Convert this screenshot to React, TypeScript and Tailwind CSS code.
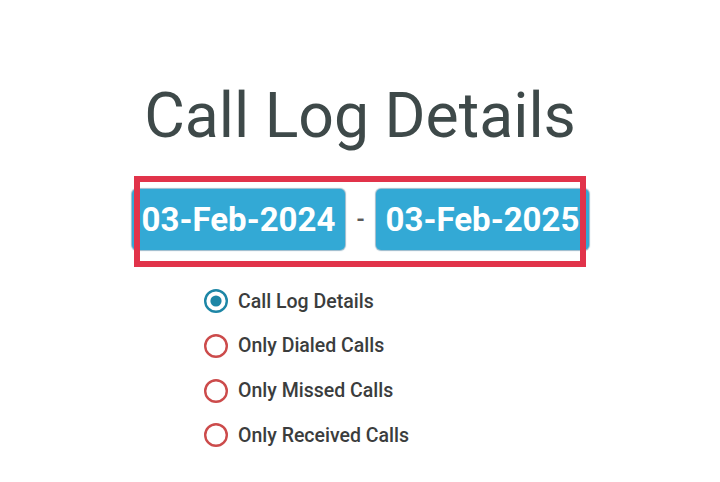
import React, { useState } from 'react';

const options = ['Call Log Details', 'Only Dialed Calls', 'Only Missed Calls', 'Only Received Calls'];

function Radio({ checked }: { checked: boolean }) {
  return (
    <svg width="26" height="26" viewBox="0 0 26 26" className="shrink-0">
      <circle
        cx="13"
        cy="13"
        r="10.8"
        fill="none"
        stroke={checked ? '#1d86a6' : '#cc4b4b'}
        strokeWidth="2.4"
      />
      {checked && <circle cx="13" cy="13" r="5.6" fill="#1d86a6" />}
    </svg>
  );
}

export default function App() {
  const [selected, setSelected] = useState(0);

  return (
    <div className="w-full h-[482px] bg-white flex flex-col items-center pt-[79px] font-['Roboto',sans-serif] overflow-hidden">
      <h1 className="text-[62.5px] leading-[74px] text-[#3e4949] font-normal">Call Log Details</h1>

      {/* Date range */}
      <div className="relative mt-[23px] w-[452px] h-[91px] pt-[13px]">
        <div className="flex items-center ml-[-2px] w-[457px]">
          <div className="w-[213px] h-[61px] rounded-[5px] bg-[#33a9d5] shadow-[0_0_1px_1px_rgba(30,100,140,0.45)] flex items-center justify-center text-white text-[33px] font-bold">
            03-Feb-2024
          </div>
          <span className="w-[31px] text-center text-[22px] font-bold text-[#5a5a5a]">-</span>
          <div className="w-[213px] h-[61px] rounded-[5px] bg-[#33a9d5] shadow-[0_0_1px_1px_rgba(30,100,140,0.45)] flex items-center justify-center text-white text-[33px] font-bold">
            03-Feb-2025
          </div>
        </div>
        <div className="absolute inset-0 border-[6px] border-[#e1334a] pointer-events-none" />
      </div>

      {/* Options */}
      <div className="self-start ml-[203px] mt-[12px] flex flex-col">
        {options.map((label, i) => (
          <button
            key={label}
            onClick={() => setSelected(i)}
            className="h-[44.67px] flex items-center gap-[9px] text-left"
          >
            <Radio checked={selected === i} />
            <span className="text-[19.5px] font-medium text-[#3b3d3d]">{label}</span>
          </button>
        ))}
      </div>
    </div>
  );
}
